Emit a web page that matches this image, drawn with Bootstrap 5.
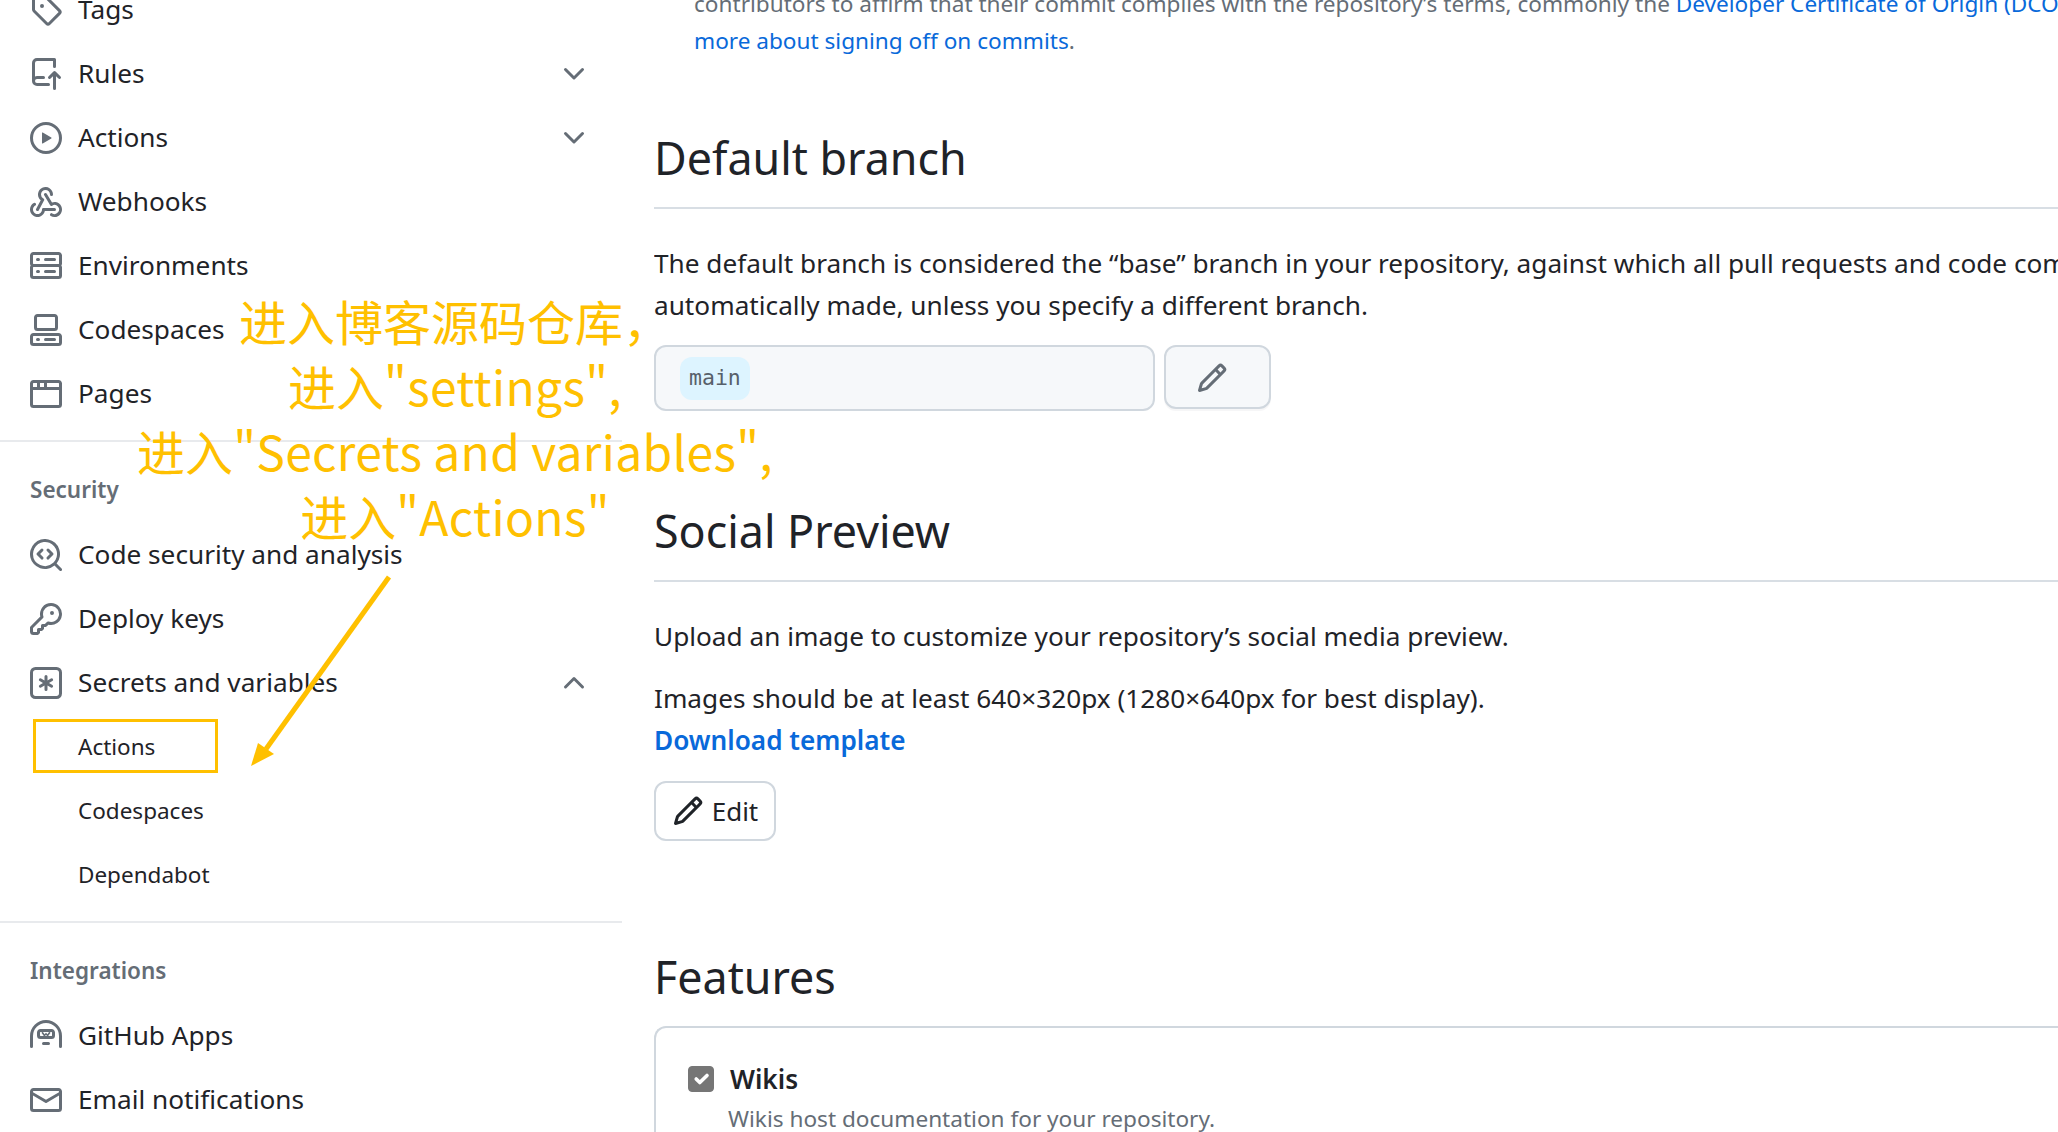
<!DOCTYPE html>
<html lang="zh-CN">
<head>
    <meta charset="UTF-8">
    <meta name="viewport" content="width=device-width, initial-scale=1.0">
    <title>Settings</title>
    <link href="https://cdn.jsdelivr.net/npm/bootstrap@5.3.0/dist/css/bootstrap.min.css" rel="stylesheet">
    <style>
        html, body { height: 100%; overflow: hidden; }
        body {
            font-family: "Noto Sans", sans-serif;
            font-size: 26.2px;
            color: #1f2328;
            background: #fff;
            position: relative;
        }
        a { color: #0969da; text-decoration: none; }
        .ico { width: 32px; height: 32px; fill: #656d76; flex-shrink: 0; }
        .side-col { width: 622px; margin-top: -22px; flex-shrink: 0; }
        .side-item { height: 64px; padding: 0 32px 0 30px; gap: 16px; color: #1f2328; }
        .side-item .chev { margin-left: auto; }
        .side-sub { padding-left: 78px; font-size: 22.5px; }
        .side-line { height: 2px; background: #e8eaed; margin: 14px 0 0; }
        .side-head { height: 81px; padding: 34px 0 0 30px; font-size: 22.5px; font-weight: 600; color: #656d76; margin: 0; }
        .main-col { margin-left: 32px; min-width: 0; flex-grow: 1; overflow: hidden; height: 1132px; }
        .note-text { font-size: 22.6px; line-height: 37px; color: #656d76; padding-left: 40px; margin: -15px 0 0; white-space: nowrap; }
        .sec-title { font-size: 44.8px; font-weight: 400; line-height: 64px; margin: 0; padding-bottom: 17px; border-bottom: 2px solid #d8dee4; white-space: nowrap; }
        .title-branch { margin-top: 67px; }
        .title-social { margin-top: 88px; }
        .title-features { margin-top: 104px; padding: 0; border: 0; }
        .body-text { line-height: 42px; margin: 33px 0 0; white-space: nowrap; }
        .body-next { margin-top: 20px; }
        .branch-row { margin-top: 19px; gap: 9px; }
        .branch-field { width: 501px; height: 66px; background: #f6f8fa; border: 2px solid #d0d7de; border-radius: 12px; padding-left: 24px; }
        .branch-pill { font-family: "DejaVu Sans Mono", monospace; font-size: 21.5px; color: #57606a; background: #ddf4ff; border-radius: 12px; height: 43px; padding: 0 9px; margin: 0; }
        .ghost-btn { height: 64px; width: 107px; background: #f6f8fa; border: 2px solid #d0d7de; border-radius: 12px; padding: 1px 11px 0 0; box-shadow: 0 2px 0 rgba(31,35,40,.04); }
        .edit-btn { height: 60px; width: 122px; margin-top: 20px; font-size: 26px; color: #1f2328; background: #fff; border: 2px solid #d0d7de; border-radius: 12px; gap: 8px; padding: 0; }
        .edit-btn .ico { fill: #1f2328; }
        .feature-box { border: 2px solid #d0d7de; border-right: 0; border-radius: 12px 0 0 0; margin: 17px 0 0; padding: 30px 32px 0; height: 200px; }
        .feature-box .form-check-input { width: 26px; height: 26px; margin: 0; background-color: #767676; border-color: #767676; border-radius: 4px; opacity: 1; flex-shrink: 0; }
        .feature-name { font-weight: 600; line-height: 42px; }
        .feature-desc { font-size: 22.6px; color: #656d76; line-height: 36px; padding-left: 40px; margin-top: 1px; }
        .note-layer { left: 0; top: 288px; width: 910px; text-align: center; font-family: "Noto Sans CJK SC", sans-serif; font-size: 48px; line-height: 65px; color: #ffc000; pointer-events: none; }
        .note-latin { letter-spacing: .3px; }
        .mark-box { left: 33px; top: 719px; width: 185px; height: 54px; border: 3px solid #ffc000; }
        .mark-arrow { left: 240px; top: 570px; width: 160px; height: 210px; }
    </style>
</head>
<body>
    <svg width="0" height="0" class="position-absolute">
        <symbol id="i-tag" viewBox="0 0 16 16"><path d="M1 7.775V2.75C1 1.784 1.784 1 2.75 1h5.025c.464 0 .91.184 1.238.513l6.25 6.25a1.75 1.75 0 0 1 0 2.474l-5.026 5.026a1.75 1.75 0 0 1-2.474 0l-6.25-6.25A1.752 1.752 0 0 1 1 7.775Zm1.5 0c0 .066.026.13.073.177l6.25 6.25a.25.25 0 0 0 .354 0l5.025-5.025a.25.25 0 0 0 0-.354l-6.25-6.25a.25.25 0 0 0-.177-.073H2.75a.25.25 0 0 0-.25.25ZM6 5a1 1 0 1 1 0 2 1 1 0 0 1 0-2Z"/></symbol>
        <symbol id="i-rules" viewBox="0 0 16 16"><path d="M1 2.5A2.5 2.5 0 0 1 3.5 0h8.75a.75.75 0 0 1 .75.75v3.5a.75.75 0 0 1-1.5 0V1.5h-8a1 1 0 0 0-1 1v6.708A2.493 2.493 0 0 1 3.5 9h3.25a.75.75 0 0 1 0 1.5H3.5a1 1 0 0 0 0 2h5.75a.75.75 0 0 1 0 1.5H3.5A2.5 2.5 0 0 1 1 11.5Zm13.23 7.79h-.001l-1.224-1.224v6.184a.75.75 0 0 1-1.5 0V9.066L10.28 10.29a.75.75 0 0 1-1.06-1.061l2.505-2.504a.75.75 0 0 1 1.06 0L15.29 9.23a.751.751 0 0 1-.018 1.042.751.751 0 0 1-1.042.018Z"/></symbol>
        <symbol id="i-play" viewBox="0 0 16 16"><path d="M8 0a8 8 0 1 1 0 16A8 8 0 0 1 8 0ZM1.5 8a6.5 6.5 0 1 0 13 0 6.5 6.5 0 0 0-13 0Zm4.879-2.773 4.264 2.559a.25.25 0 0 1 0 .428l-4.264 2.559A.25.25 0 0 1 6 10.559V5.442a.25.25 0 0 1 .379-.215Z"/></symbol>
        <symbol id="i-hook" viewBox="0 0 16 16"><path d="M5.5 4.25a2.25 2.25 0 0 1 4.5 0 .75.75 0 0 0 1.5 0 3.75 3.75 0 1 0-6.14 2.889l-2.272 4.258a.75.75 0 0 0 1.324.706L7 7.25a.75.75 0 0 0-.309-1.015A2.25 2.25 0 0 1 5.5 4.25Z"/><path d="M7.364 3.607a.75.75 0 0 1 1.03.257l2.608 4.349a3.75 3.75 0 1 1-.628 6.785.75.75 0 0 1 .752-1.299 2.25 2.25 0 1 0-.033-3.88.75.75 0 0 1-1.03-.256L7.107 4.636a.75.75 0 0 1 .257-1.03Z"/><path d="M2.9 8.776A.75.75 0 0 1 2.625 9.8 2.25 2.25 0 1 0 6 11.75a.75.75 0 0 1 .75-.751h5.5a.75.75 0 0 1 0 1.5H7.425a3.751 3.751 0 1 1-5.55-3.998.75.75 0 0 1 1.024.274Z"/></symbol>
        <symbol id="i-server" viewBox="0 0 16 16"><path d="M1.75 1h12.5c.966 0 1.75.784 1.75 1.75v4c0 .372-.116.717-.314 1 .198.283.314.628.314 1v4a1.75 1.75 0 0 1-1.75 1.75H1.75A1.75 1.75 0 0 1 0 12.75v-4c0-.372.116-.717.314-1A1.745 1.745 0 0 1 0 6.75v-4C0 1.784.784 1 1.75 1ZM1.5 2.75v4c0 .138.112.25.25.25h12.5a.25.25 0 0 0 .25-.25v-4a.25.25 0 0 0-.25-.25H1.75a.25.25 0 0 0-.25.25Zm.25 5.75a.25.25 0 0 0-.25.25v4c0 .138.112.25.25.25h12.5a.25.25 0 0 0 .25-.25v-4a.25.25 0 0 0-.25-.25ZM7 4.75A.75.75 0 0 1 7.75 4h4.5a.75.75 0 0 1 0 1.5h-4.5A.75.75 0 0 1 7 4.75ZM7.75 10h4.5a.75.75 0 0 1 0 1.5h-4.5a.75.75 0 0 1 0-1.5ZM3 4.75A.75.75 0 0 1 3.75 4h.5a.75.75 0 0 1 0 1.5h-.5A.75.75 0 0 1 3 4.75ZM3.75 10h.5a.75.75 0 0 1 0 1.5h-.5a.75.75 0 0 1 0-1.5Z"/></symbol>
        <symbol id="i-code" viewBox="0 0 16 16"><path d="M0 11.25c0-.966.784-1.75 1.75-1.75h12.5c.966 0 1.75.784 1.75 1.75v3A1.75 1.75 0 0 1 14.25 16H1.75A1.75 1.75 0 0 1 0 14.25Zm2-9.5C2 .784 2.784 0 3.75 0h8.5C13.216 0 14 .784 14 1.75v5a1.75 1.75 0 0 1-1.75 1.75h-8.5A1.75 1.75 0 0 1 2 6.75Zm1.75-.25a.25.25 0 0 0-.25.25v5c0 .138.112.25.25.25h8.5a.25.25 0 0 0 .25-.25v-5a.25.25 0 0 0-.25-.25Zm-2 9.5a.25.25 0 0 0-.25.25v3c0 .138.112.25.25.25h12.5a.25.25 0 0 0 .25-.25v-3a.25.25 0 0 0-.25-.25Z"/><path d="M7 12.75a.75.75 0 0 1 .75-.75h4.5a.75.75 0 0 1 0 1.5h-4.5a.75.75 0 0 1-.75-.75Zm-4 0a.75.75 0 0 1 .75-.75h.5a.75.75 0 0 1 0 1.5h-.5a.75.75 0 0 1-.75-.75Z"/></symbol>
        <symbol id="i-browser" viewBox="0 0 16 16"><path d="M0 2.75C0 1.784.784 1 1.75 1h12.5c.966 0 1.75.784 1.75 1.75v10.5A1.75 1.75 0 0 1 14.25 15H1.75A1.75 1.75 0 0 1 0 13.25ZM14.5 6h-13v7.25c0 .138.112.25.25.25h12.5a.25.25 0 0 0 .25-.25Zm-6-3.5v2h6V2.75a.25.25 0 0 0-.25-.25ZM5 2.5v2h2v-2Zm-3.25 0a.25.25 0 0 0-.25.25V4.5h2v-2Z"/></symbol>
        <symbol id="i-scan" viewBox="0 0 16 16"><path d="M8.47 4.97a.75.75 0 0 0 0 1.06L9.94 7.5 8.47 8.97a.75.75 0 1 0 1.06 1.06l2-2a.75.75 0 0 0 0-1.06l-2-2a.75.75 0 0 0-1.06 0ZM6.53 6.03a.75.75 0 0 0-1.06-1.06l-2 2a.75.75 0 0 0 0 1.06l2 2a.75.75 0 1 0 1.06-1.06L5.06 7.5l1.47-1.47Z"/><path d="M12.246 13.307a7.501 7.501 0 1 1 1.06-1.06l2.474 2.473a.749.749 0 0 1-.326 1.275.749.749 0 0 1-.734-.215ZM1.5 7.5a6.002 6.002 0 0 0 3.608 5.504 6.002 6.002 0 0 0 6.486-1.117.748.748 0 0 1 .292-.293A6 6 0 1 0 1.5 7.5Z"/></symbol>
        <symbol id="i-key" viewBox="0 0 16 16"><path d="M10.5 0a5.499 5.499 0 1 1-1.288 10.848l-.932.932a.749.749 0 0 1-.53.22H7v.75a.749.749 0 0 1-.22.53l-.5.5a.749.749 0 0 1-.53.22H5v.75a.749.749 0 0 1-.22.53l-.5.5a.749.749 0 0 1-.53.22h-2A1.75 1.75 0 0 1 0 14.25v-2c0-.199.079-.389.22-.53l4.932-4.932A5.5 5.5 0 0 1 10.5 0Zm-4 5.5c-.001.431.069.86.205 1.269a.75.75 0 0 1-.181.768L1.5 12.56v1.69c0 .138.112.25.25.25h1.69l.06-.06v-1.19a.75.75 0 0 1 .75-.75h1.19l.06-.06v-1.19a.75.75 0 0 1 .75-.75h1.19l1.023-1.025a.75.75 0 0 1 .768-.18A4 4 0 1 0 6.5 5.5ZM11 6a1 1 0 1 1 0-2 1 1 0 0 1 0 2Z"/></symbol>
        <symbol id="i-star" viewBox="0 0 16 16"><path d="M0 2.75A2.75 2.75 0 0 1 2.75 0h10.5A2.75 2.75 0 0 1 16 2.75v10.5A2.75 2.75 0 0 1 13.25 16H2.75A2.75 2.75 0 0 1 0 13.25ZM2.75 1.5c-.69 0-1.25.56-1.25 1.25v10.5c0 .69.56 1.25 1.25 1.25h10.5c.69 0 1.25-.56 1.25-1.25V2.75c0-.69-.56-1.25-1.25-1.25Z"/><path d="M8 4a.75.75 0 0 1 .75.75V6.7l1.69-.975a.75.75 0 0 1 .75 1.3L9.5 8l1.69.976a.75.75 0 0 1-.75 1.298L8.75 9.3v1.951a.75.75 0 0 1-1.5 0V9.299l-1.69.976a.75.75 0 0 1-.75-1.3L6.5 8l-1.69-.975a.75.75 0 0 1 .75-1.3l1.69.976V4.75A.75.75 0 0 1 8 4Z"/></symbol>
        <symbol id="i-hubot" viewBox="0 0 16 16"><path d="M0 8a8 8 0 0 1 16 0v5.25a.75.75 0 0 1-1.5 0V8a6.5 6.5 0 1 0-13 0v5.25a.75.75 0 0 1-1.5 0Z"/><path d="M5.25 4.5h5.5c.966 0 1.75.784 1.75 1.75v1.5a1.75 1.75 0 0 1-1.75 1.75h-5.5A1.75 1.75 0 0 1 3.5 7.75v-1.5c0-.966.784-1.75 1.75-1.75Zm0 1.5a.25.25 0 0 0-.25.25v1.5c0 .138.112.25.25.25h5.5a.25.25 0 0 0 .25-.25v-1.5a.25.25 0 0 0-.25-.25Z"/><path d="M6.4 5.9l.9 1.2.7-.7.7.7.9-1.2.7.5-1.4 1.9-.9-.8-.9.8-1.4-1.9ZM6.75 11h2.5a.75.75 0 0 1 0 1.5h-2.5a.75.75 0 0 1 0-1.5Z"/></symbol>
        <symbol id="i-mail" viewBox="0 0 16 16"><path d="M1.75 2h12.5c.966 0 1.75.784 1.75 1.75v8.5A1.75 1.75 0 0 1 14.25 14H1.75A1.75 1.75 0 0 1 0 12.25v-8.5C0 2.784.784 2 1.75 2ZM1.5 12.251c0 .138.112.25.25.25h12.5a.25.25 0 0 0 .25-.25V5.809L8.38 9.397a.75.75 0 0 1-.76 0L1.5 5.809v6.442Zm13-8.181v-.32a.25.25 0 0 0-.25-.25H1.75a.25.25 0 0 0-.25.25v.32L8 7.88Z"/></symbol>
        <symbol id="i-pencil" viewBox="0 0 16 16"><path d="M11.013 1.427a1.75 1.75 0 0 1 2.474 0l1.086 1.086a1.75 1.75 0 0 1 0 2.474l-8.61 8.61c-.21.21-.47.364-.756.445l-3.251.93a.75.75 0 0 1-.927-.928l.929-3.25c.081-.286.235-.547.445-.758l8.61-8.61Zm.176 4.823L9.75 4.81l-6.286 6.287a.253.253 0 0 0-.064.108l-.558 1.953 1.953-.558a.253.253 0 0 0 .108-.064Zm1.238-3.763a.25.25 0 0 0-.354 0L10.811 3.75l1.439 1.44 1.263-1.263a.25.25 0 0 0 0-.354Z"/></symbol>
        <symbol id="i-down" viewBox="0 0 16 16"><path d="M12.78 5.22a.749.749 0 0 1 0 1.06l-4.25 4.25a.749.749 0 0 1-1.06 0L3.22 6.28a.749.749 0 1 1 1.06-1.06L8 8.939l3.72-3.719a.749.749 0 0 1 1.06 0Z"/></symbol>
        <symbol id="i-up" viewBox="0 0 16 16"><path d="M3.22 10.53a.749.749 0 0 1 0-1.06l4.25-4.25a.749.749 0 0 1 1.06 0l4.25 4.25a.749.749 0 1 1-1.06 1.06L8 6.811 4.28 10.53a.749.749 0 0 1-1.06 0Z"/></symbol>
    </svg>

    <div class="d-flex">
        <nav class="side-col">
            <a class="side-item d-flex align-items-center" href="#"><svg class="ico"><use href="#i-tag"/></svg>Tags</a>
            <a class="side-item d-flex align-items-center" href="#"><svg class="ico"><use href="#i-rules"/></svg>Rules<svg class="ico chev"><use href="#i-down"/></svg></a>
            <a class="side-item d-flex align-items-center" href="#"><svg class="ico"><use href="#i-play"/></svg>Actions<svg class="ico chev"><use href="#i-down"/></svg></a>
            <a class="side-item d-flex align-items-center" href="#"><svg class="ico"><use href="#i-hook"/></svg>Webhooks</a>
            <a class="side-item d-flex align-items-center" href="#"><svg class="ico"><use href="#i-server"/></svg>Environments</a>
            <a class="side-item d-flex align-items-center" href="#"><svg class="ico"><use href="#i-code"/></svg>Codespaces</a>
            <a class="side-item d-flex align-items-center" href="#"><svg class="ico"><use href="#i-browser"/></svg>Pages</a>
            <div class="side-line"></div>
            <h2 class="side-head">Security</h2>
            <a class="side-item d-flex align-items-center" href="#"><svg class="ico"><use href="#i-scan"/></svg>Code security and analysis</a>
            <a class="side-item d-flex align-items-center" href="#"><svg class="ico"><use href="#i-key"/></svg>Deploy keys</a>
            <a class="side-item d-flex align-items-center" href="#"><svg class="ico"><use href="#i-star"/></svg>Secrets and variables<svg class="ico chev"><use href="#i-up"/></svg></a>
            <a class="side-item side-sub d-flex align-items-center" href="#">Actions</a>
            <a class="side-item side-sub d-flex align-items-center" href="#">Codespaces</a>
            <a class="side-item side-sub d-flex align-items-center" href="#">Dependabot</a>
            <div class="side-line"></div>
            <h2 class="side-head">Integrations</h2>
            <a class="side-item d-flex align-items-center" href="#"><svg class="ico"><use href="#i-hubot"/></svg>GitHub Apps</a>
            <a class="side-item d-flex align-items-center" href="#"><svg class="ico"><use href="#i-mail"/></svg>Email notifications</a>
        </nav>

        <main class="main-col">
            <p class="note-text">contributors to affirm that their commit complies with the repository’s terms, commonly the <a href="#">Developer Certificate of Origin (DCO). Learn</a><br><a href="#">more about signing off on commits</a>.</p>

            <h2 class="sec-title title-branch">Default branch</h2>
            <p class="body-text">The default branch is considered the “base” branch in your repository, against which all pull requests and code commits are<br>automatically made, unless you specify a different branch.</p>
            <div class="d-flex branch-row">
                <div class="branch-field d-flex align-items-center"><code class="branch-pill d-flex align-items-center">main</code></div>
                <button class="btn ghost-btn" type="button"><svg class="ico"><use href="#i-pencil"/></svg></button>
            </div>

            <h2 class="sec-title title-social">Social Preview</h2>
            <p class="body-text">Upload an image to customize your repository’s social media preview.</p>
            <p class="body-text body-next">Images should be at least 640×320px (1280×640px for best display).<br><a class="fw-semibold" href="#">Download template</a></p>
            <button class="btn edit-btn d-flex align-items-center justify-content-center" type="button"><svg class="ico"><use href="#i-pencil"/></svg>Edit</button>

            <h2 class="sec-title title-features">Features</h2>
            <div class="feature-box">
                <div class="d-flex align-items-center gap-3">
                    <input class="form-check-input" type="checkbox" checked>
                    <span class="feature-name">Wikis</span>
                </div>
                <div class="feature-desc">Wikis host documentation for your repository.</div>
            </div>
        </main>
    </div>

    <div class="note-layer position-absolute">进入博客源码仓库，<br>进入<span class="note-latin">"settings",</span><br>进入<span class="note-latin">"Secrets and variables",</span><br>进入<span class="note-latin">"Actions"</span></div>
    <div class="mark-box position-absolute"></div>
    <svg class="mark-arrow position-absolute" viewBox="240 570 160 210">
        <path d="M389 577 266 749" fill="none" stroke="#ffc000" stroke-width="5"/>
        <path d="M251 766 258 743 274 754Z" fill="#ffc000"/>
    </svg>

    <script src="https://cdn.jsdelivr.net/npm/bootstrap@5.3.0/dist/js/bootstrap.bundle.min.js"></script>
</body>
</html>
